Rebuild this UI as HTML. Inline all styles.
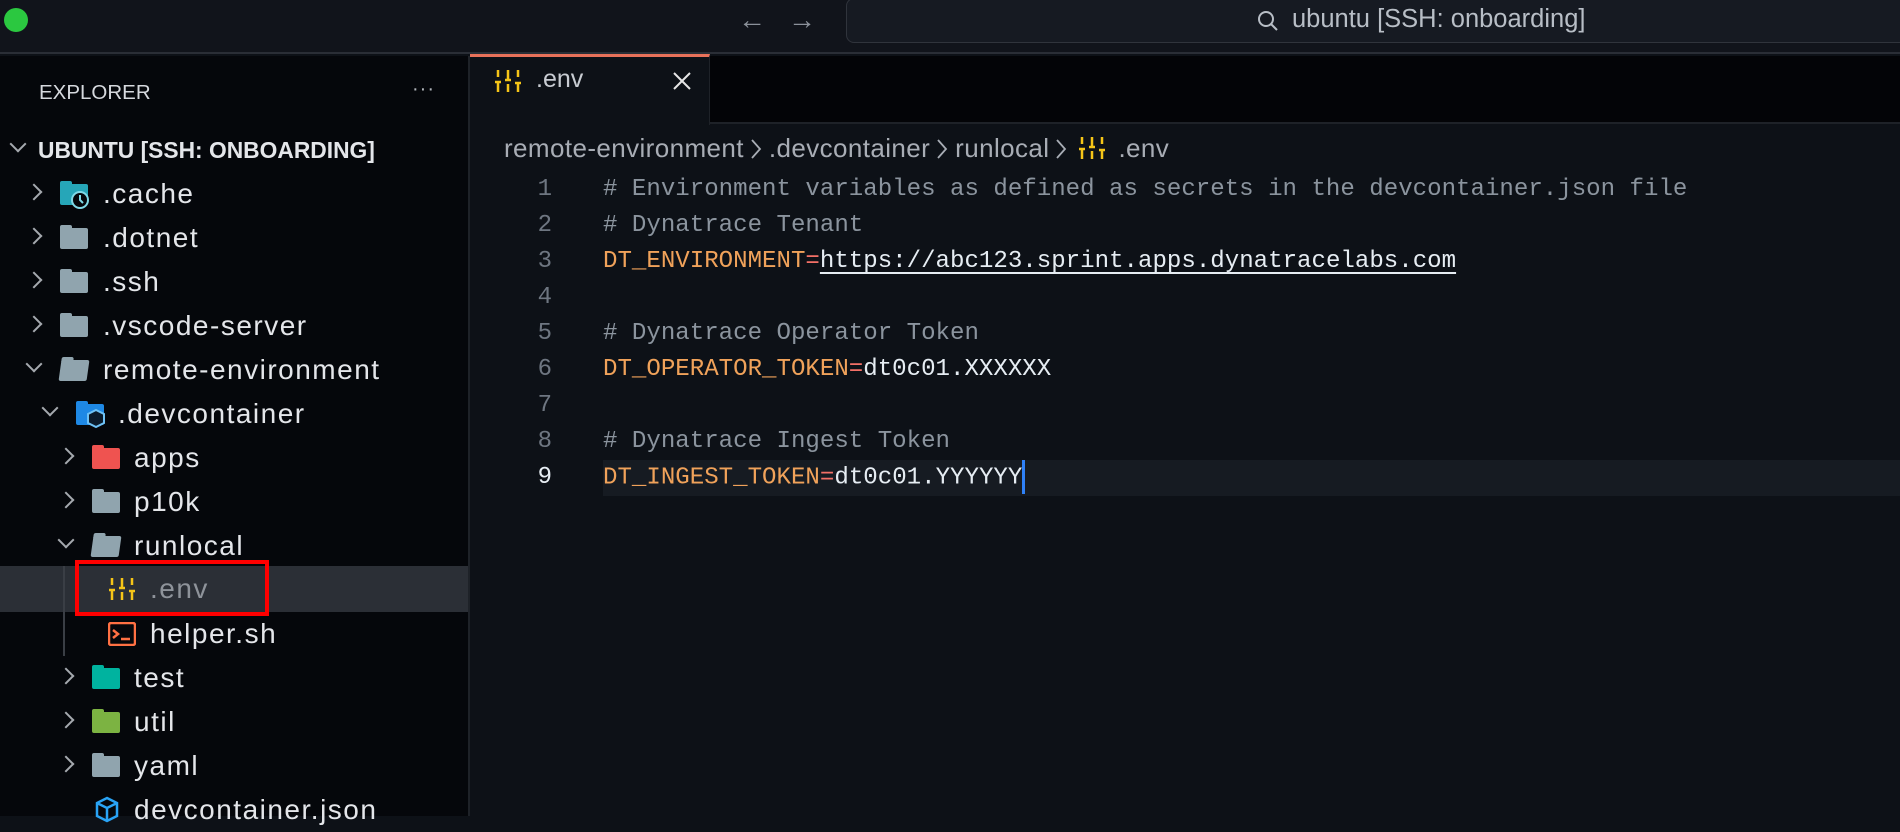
<!DOCTYPE html>
<html><head><meta charset="utf-8"><style>
*{margin:0;padding:0;box-sizing:border-box}
body{width:1900px;height:816px;overflow:hidden;background:#0d1117;font-family:"Liberation Sans",sans-serif;position:relative;color:#e6edf3}
.title{position:absolute;left:0;top:0;width:1900px;height:54px;background:#11141b;border-bottom:2px solid #2a2e36}
.dot{position:absolute;left:4px;top:8px;width:24px;height:24px;border-radius:50%;background:#2bc840}
.arr{position:absolute;top:4px;font-size:28px;color:#8b919a}
.search{position:absolute;left:846px;top:-2px;width:1080px;height:45px;border:1px solid #30343c;border-radius:8px;background:#161a22}
.stxt{position:absolute;left:1292px;top:5px;font-size:25.5px;color:#b8bec6}
.side{position:absolute;left:0;top:56px;width:470px;height:760px;background:#05070b;border-right:2px solid #1e2228}
.exp{position:absolute;left:39px;top:81px;font-size:20.5px;color:#d6d9de}
.dots{position:absolute;left:412px;top:78px;font-size:20px;color:#b0b4ba;letter-spacing:1px}
.row{position:absolute;left:0;width:468px;height:44px;font-size:28px;letter-spacing:1.5px;color:#e4e6ea;line-height:44px;white-space:nowrap}
.row span.t{position:absolute}
.chev{position:absolute;top:14px;width:12px;height:12px;border-right:2px solid #a5a9af;border-bottom:2px solid #a5a9af}
.chev.r{transform:rotate(-45deg)}
.chev.d{transform:rotate(45deg);top:10px}
.fold{position:absolute;top:12px;width:28px;height:21px;background:#90a4ae;border-radius:2px}
.fold:before{content:"";position:absolute;left:0;top:-3px;width:12px;height:5px;background:inherit;border-radius:2px 2px 0 0}
.tabbar{position:absolute;left:470px;top:56px;width:1430px;height:68px;background:#030407;border-bottom:2px solid #1e2228}
.tab{position:absolute;left:470px;top:54px;width:240px;height:71px;background:#0d1117;border-top:3px solid #e8715a;border-right:1px solid #1e2228}
.crumb{position:absolute;left:504px;top:133px;font-size:26px;color:#a8adb5;white-space:nowrap;letter-spacing:0.4px}
.crumb svg{vertical-align:-3px}
.crumb .cv{margin:0 7px 0 6px}
.code{position:absolute;left:0;font-family:"Liberation Mono",monospace;font-size:24.1px;white-space:pre;height:36px;line-height:36px}
.ln{position:absolute;width:552px;text-align:right;left:0;font-family:"Liberation Mono",monospace;font-size:24px;color:#6e7681;line-height:36px}
.c{color:#8b949e}.k{color:#f0a25a}.e{color:#f47067}.v{color:#e6edf3}
</style></head><body>
<div class="title"><div class="dot"></div>
<div class="arr" style="left:738px">←</div><div class="arr" style="left:788px">→</div>
<div class="search"></div>
<svg style="position:absolute;left:1256px;top:9px" width="24" height="24" viewBox="0 0 24 24"><circle cx="10" cy="10" r="7" fill="none" stroke="#b8bec6" stroke-width="2"/><path d="M15 15l6 6" stroke="#b8bec6" stroke-width="2"/></svg>
<div class="stxt">ubuntu [SSH: onboarding]</div></div>

<div class="side"></div>
<div class="exp">EXPLORER</div><div class="dots">···</div>

<div class="row" style="top:128px;font-weight:bold;font-size:22.8px;letter-spacing:0"><i class="chev d" style="left:12px"></i><span class="t" style="left:38px">UBUNTU [SSH: ONBOARDING]</span></div>
<div class="row" style="top:172px"><i class="chev r" style="left:28px"></i><i class="fold" style="left:60px;background:#26a6b8"></i><svg style="position:absolute;left:70px;top:18px" width="20" height="20"><circle cx="10" cy="10" r="8" fill="#05070b" stroke="#7fd8e6" stroke-width="2"/><path d="M10 5v5l3 3" stroke="#7fd8e6" stroke-width="2" fill="none"/></svg><span class="t" style="left:103px">.cache</span></div>
<div class="row" style="top:216px"><i class="chev r" style="left:28px"></i><i class="fold" style="left:60px"></i><span class="t" style="left:103px">.dotnet</span></div>
<div class="row" style="top:260px"><i class="chev r" style="left:28px"></i><i class="fold" style="left:60px"></i><span class="t" style="left:103px">.ssh</span></div>
<div class="row" style="top:304px"><i class="chev r" style="left:28px"></i><i class="fold" style="left:60px"></i><span class="t" style="left:103px">.vscode-server</span></div>
<div class="row" style="top:348px"><i class="chev d" style="left:28px"></i><i class="fold" style="left:60px;background:#90a4ae;transform:skewX(-8deg)"></i><span class="t" style="left:103px">remote-environment</span></div>
<div class="row" style="top:392px"><i class="chev d" style="left:44px"></i><i class="fold" style="left:76px;background:#1e88e5"></i><svg style="position:absolute;left:86px;top:16px" width="20" height="22"><path d="M10 2l8 4v9l-8 4-8-4V6z" fill="#0b1a2a" stroke="#6ec1f5" stroke-width="2"/></svg><span class="t" style="left:118px">.devcontainer</span></div>
<div class="row" style="top:436px"><i class="chev r" style="left:60px"></i><i class="fold" style="left:92px;background:#ef5350"></i><span class="t" style="left:134px">apps</span></div>
<div class="row" style="top:480px"><i class="chev r" style="left:60px"></i><i class="fold" style="left:92px"></i><span class="t" style="left:134px">p10k</span></div>
<div class="row" style="top:524px"><i class="chev d" style="left:60px"></i><i class="fold" style="left:92px;transform:skewX(-8deg)"></i><span class="t" style="left:134px">runlocal</span></div>
<div class="row" style="top:566px;background:#2b2f36;height:46px"><svg style="position:absolute;left:108px;top:11px" width="28" height="24" viewBox="0 0 28 24"><g stroke="#f5c518" stroke-width="2.5" fill="none"><path d="M4 1v7M4 13v10M1 13h6M14 1v10M11 11h6M14 15v8M24 1v7M24 14v9M21 14h6"/></g></svg><span class="t" style="left:150px;color:#8e939a;top:1px">.env</span></div>
<div style="position:absolute;left:75px;top:560px;width:194px;height:56px;border:4px solid #f00"></div>
<div style="position:absolute;left:63px;top:566px;width:2px;height:90px;background:#3a3e45"></div>
<div class="row" style="top:612px"><svg style="position:absolute;left:108px;top:10px" width="28" height="24"><rect x="1" y="1" width="26" height="22" rx="2" fill="none" stroke="#ff7043" stroke-width="2.5"/><path d="M5 8l5 4-5 4M13 17h9" stroke="#ff7043" stroke-width="2.5" fill="none"/></svg><span class="t" style="left:150px">helper.sh</span></div>
<div class="row" style="top:656px"><i class="chev r" style="left:60px"></i><i class="fold" style="left:92px;background:#00b39f"></i><span class="t" style="left:134px">test</span></div>
<div class="row" style="top:700px"><i class="chev r" style="left:60px"></i><i class="fold" style="left:92px;background:#7cb342"></i><span class="t" style="left:134px">util</span></div>
<div class="row" style="top:744px"><i class="chev r" style="left:60px"></i><i class="fold" style="left:92px"></i><span class="t" style="left:134px">yaml</span></div>
<div class="row" style="top:788px"><svg style="position:absolute;left:94px;top:8px" width="26" height="28"><path d="M13 2l10 5v13l-10 5-10-5V7z M3 7l10 5 10-5 M13 12v13" fill="none" stroke="#29a3f5" stroke-width="2.5"/></svg><span class="t" style="left:134px">devcontainer.json</span></div>

<div class="tabbar"></div>
<div class="tab"><svg style="position:absolute;left:24px;top:12px" width="28" height="24" viewBox="0 0 28 24"><g stroke="#f5c518" stroke-width="2.5" fill="none"><path d="M4 1v7M4 13v10M1 13h6M14 1v10M11 11h6M14 15v8M24 1v7M24 14v9M21 14h6"/></g></svg><span style="position:absolute;left:66px;top:8px;font-size:25px;color:#c8ccd2">.env</span><svg style="position:absolute;left:202px;top:14px" width="20" height="20"><path d="M2 2l16 16M18 2L2 18" stroke="#e6e6e6" stroke-width="2"/></svg></div>
<div class="crumb">remote-environment<svg class="cv" width="12" height="22"><path d="M2 2l8 9-8 9" stroke="#a8adb5" stroke-width="1.8" fill="none"/></svg>.devcontainer<svg class="cv" width="12" height="22"><path d="M2 2l8 9-8 9" stroke="#a8adb5" stroke-width="1.8" fill="none"/></svg>runlocal<svg class="cv" width="12" height="22"><path d="M2 2l8 9-8 9" stroke="#a8adb5" stroke-width="1.8" fill="none"/></svg><svg style="margin:0 12px 0 4px" width="28" height="24" viewBox="0 0 28 24"><g stroke="#f5c518" stroke-width="2.5" fill="none"><path d="M4 1v7M4 13v10M1 13h6M14 1v10M11 11h6M14 15v8M24 1v7M24 14v9M21 14h6"/></g></svg>.env</div>

<div style="position:absolute;left:603px;top:460px;width:1297px;height:36px;background:#161b22"></div>
<div class="ln" style="top:172px">1</div><div class="ln" style="top:208px">2</div><div class="ln" style="top:244px">3</div><div class="ln" style="top:280px">4</div><div class="ln" style="top:316px">5</div><div class="ln" style="top:352px">6</div><div class="ln" style="top:388px">7</div><div class="ln" style="top:424px">8</div><div class="ln" style="top:460px;color:#e6edf3">9</div>
<div class="code c" style="left:603px;top:172px"># Environment variables as defined as secrets in the devcontainer.json file</div>
<div class="code c" style="left:603px;top:208px"># Dynatrace Tenant</div>
<div class="code" style="left:603px;top:244px"><span class="k">DT_ENVIRONMENT</span><span class="e">=</span><span class="v" style="text-decoration:underline;text-underline-offset:5px">https://abc123.sprint.apps.dynatracelabs.com</span></div>
<div class="code c" style="left:603px;top:316px"># Dynatrace Operator Token</div>
<div class="code" style="left:603px;top:352px"><span class="k">DT_OPERATOR_TOKEN</span><span class="e">=</span><span class="v">dt0c01.XXXXXX</span></div>
<div class="code c" style="left:603px;top:424px"># Dynatrace Ingest Token</div>
<div class="code" style="left:603px;top:460px"><span class="k">DT_INGEST_TOKEN</span><span class="e">=</span><span class="v">dt0c01.YYYYYY</span><span style="display:inline-block;width:3px;height:34px;background:#2f81f7;vertical-align:middle"></span></div>
</body></html>
